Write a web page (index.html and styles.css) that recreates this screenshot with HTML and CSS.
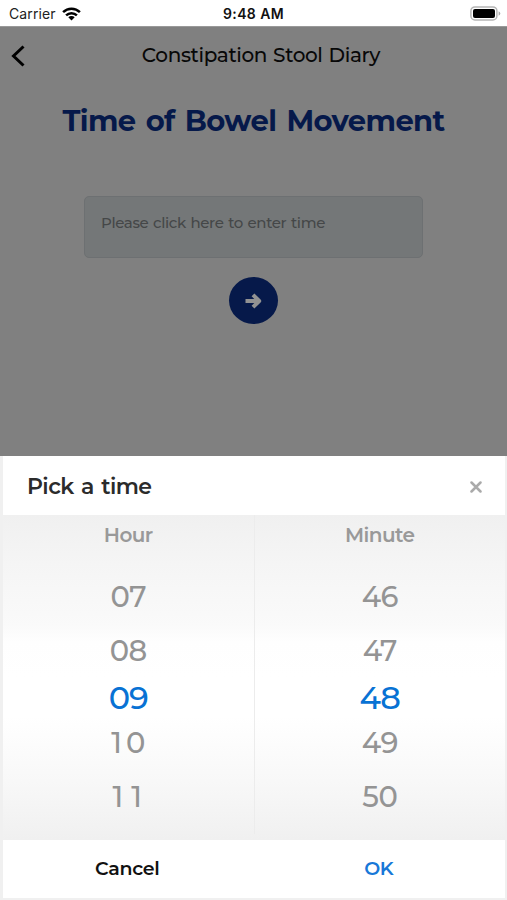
FILE: index.html
```html
<!DOCTYPE html>
<html lang="en">
<head>
<meta charset="utf-8">
<title>Constipation Stool Diary</title>
<link rel="stylesheet" href="styles.css">
</head>
<body>
<div class="status">
  <div class="carrier"><span>Carrier</span>
    <svg width="19" height="14" viewBox="0 0 19 14"><g fill="none" stroke="#000" stroke-width="2.5"><path d="M1.1 5.1a12 12 0 0 1 16.8 0"/><path d="M4.1 8.4a7.7 7.7 0 0 1 10.8 0"/></g><path d="M6.3 10.3a4.6 4.6 0 0 1 6.4 0L9.5 13.6z"/></svg>
  </div>
  <div class="clock">9:48 AM</div>
  <svg class="battery" width="31" height="15" viewBox="0 0 31 15"><rect x=".9" y=".9" width="26" height="13" rx="4" fill="#fff" stroke="#b5b5b5" stroke-width="1.5"/><rect x="3" y="3" width="22" height="9" rx="2"/><path d="M28.6 5.2q1.7.7 1.7 2.3t-1.7 2.3z" fill="#aaa"/></svg>
</div>
<main class="page">
  <header class="bar">
    <svg class="back" width="14" height="22" viewBox="0 0 14 22"><path d="M12.500 1.500 2.500 11l10 9.500" fill="none" stroke="#000" stroke-width="3"/></svg>
    <div class="bar-title">Constipation Stool Diary</div>
  </header>
  <h1>Time of Bowel Movement</h1>
  <div class="field">Please click here to enter time</div>
  <div class="next"><svg width="17" height="18" viewBox="0 0 17 18"><path d="M.5 9H13M8 2.800 14.200 9 8 15.200" fill="none" stroke="#929292" stroke-width="4" stroke-linejoin="round" stroke-linecap="butt"/></svg></div>
</main>
<section class="sheet">
  <div class="sheet-head"><span class="sheet-title">Pick a time</span>
    <svg width="12" height="12" viewBox="0 0 12 12"><path d="M1.500 1.500 10.500 10.500M10.500 1.500 1.500 10.500" stroke="#aaa" stroke-width="2.500" stroke-linecap="round"/></svg>
  </div>
  <div class="wheels">
    <div class="wheel"><div class="label">Hour</div><div class="num">07</div><div class="num">08</div><div class="num on">09</div><div class="num ten">10</div><div class="num eleven">11</div></div>
    <div class="wheel"><div class="label">Minute</div><div class="num">46</div><div class="num">47</div><div class="num on">48</div><div class="num">49</div><div class="num">50</div></div>
  </div>
  <div class="actions"><div class="cancel">Cancel</div><div class="ok">OK</div></div>
</section>
</body>
</html>
```
FILE: styles.css
```css
* { box-sizing: border-box; }
body { margin: 0; width: 507px; height: 900px; overflow: hidden; display: flex; flex-direction: column; font-family: Montserrat, Inter, sans-serif; background: #fff; }
svg { display: block; flex: none; }
.status { height: 26px; display: grid; grid-template-columns: 1fr auto 1fr; align-items: center; padding: 1px 6px 0 9px; font: 14px Inter, sans-serif; color: #222; }
.carrier { display: flex; align-items: center; gap: 6px; letter-spacing: .1px; }
.clock { font-weight: 600; color: #111; letter-spacing: .4px; margin-right: 3px; }
.battery { justify-self: end; }
.page { height: 430px; background: #808080; border-top: 1px solid #999; display: flex; flex-direction: column; align-items: center; }
.bar { width: 100%; height: 57px; display: flex; align-items: center; padding: 0 17px 0 11px; }
.bar-title { flex: 1; text-align: center; font-size: 20px; line-height: 24px; font-weight: 500; color: #080808; letter-spacing: -.37px; word-spacing: 1px; padding: 0 0 2px 7px; }
h1 { margin: 18px 0 0; height: 38px; line-height: 38px; font-size: 29px; font-weight: 700; color: #06194a; letter-spacing: -.6px; word-spacing: 2.500px; white-space: nowrap; }
.field { width: 339px; height: 62px; margin-top: 56px; border: 1.500px solid #6d7072; border-radius: 5px; background: #747778; padding: 16px 16px; font-size: 15px; line-height: 20px; font-weight: 500; color: #454748; letter-spacing: -.37px; word-spacing: 1px; white-space: nowrap; }
.next { width: 49px; height: 47px; margin-top: 19px; border-radius: 50%; background: #06194a; display: flex; align-items: center; justify-content: center; }
.sheet { height: 444px; border: solid #f0f0f0; border-width: 0 2px 2px 3px; background: #fff; }
.sheet-head { height: 59px; display: flex; align-items: center; justify-content: space-between; padding: 2px 23px 0 24px; }
.sheet-title { font-size: 22px; font-weight: 600; color: #2b2b2b; letter-spacing: -.6px; word-spacing: 2px; }
.wheels { height: 325px; display: flex; background: linear-gradient(#f0f0f0 0, #f5f5f5 15%, #fafafa 34%, #fefefe 39%, #fff 50%, #fff 62%, #f8f8f8 82%, #f0f0f0 100%); }
.wheel { flex: 1; display: flex; flex-direction: column; align-items: center; padding-top: 8px; }
.wheel:first-child { border-right: 1px solid #ececec; margin-bottom: 6px; }
.label { height: 24px; margin-bottom: 23px; line-height: 25px; font-size: 20px; font-weight: 600; color: #999; letter-spacing: -.55px; }
.num { height: 54px; line-height: 54px; font-size: 29px; font-weight: 500; color: #949494; letter-spacing: -.6px; }
.num.on { height: 38px; line-height: 39px; font-size: 32px; font-weight: 500; color: #0872d4; letter-spacing: -1px; }
.num.ten { letter-spacing: 4px; padding-left: 4px; }
.num.eleven { letter-spacing: 8px; padding-left: 6px; }
.actions { height: 58px; display: flex; text-align: center; font-size: 19px; line-height: 58px; font-weight: 600; letter-spacing: -.3px; }
.actions div { flex: 1; }
.cancel { color: #111; padding-right: 3px; }
.ok { color: #1878d8; font-weight: 600; padding-right: 2px; }
```
